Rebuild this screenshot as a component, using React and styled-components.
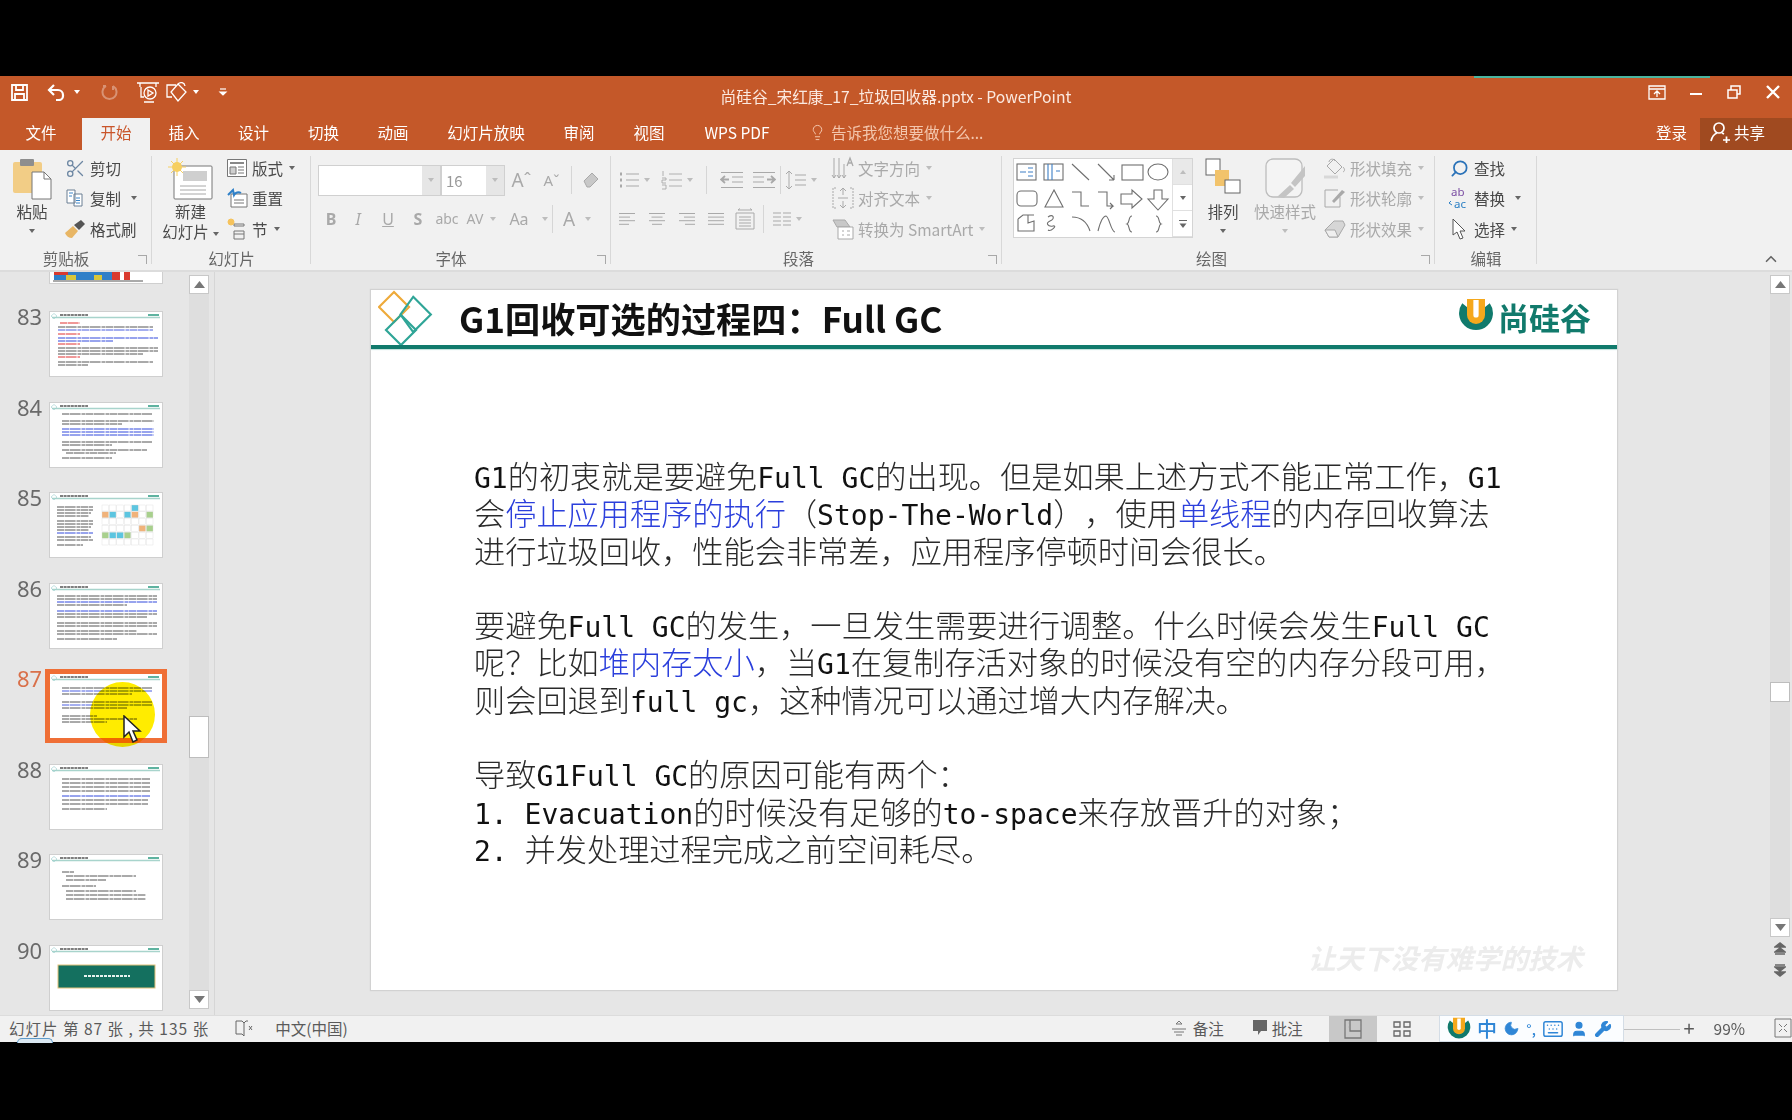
import React from 'react';
import styled, { createGlobalStyle } from 'styled-components';
import { Moon, Keyboard, User, Wrench, Lightbulb, Search, Scissors, ChevronUp } from 'lucide-react';

const UI_FONT = '"Noto Sans CJK SC", "Noto Sans", sans-serif';
const TEAL = '#117a6c';
const DIM = '#a9a9a9';
const TEXT = '#4a4a4a';

const GlobalStyle = createGlobalStyle`
  html, body { margin: 0; padding: 0; background: #000; }
  * { box-sizing: border-box; }
`;

const Screen = styled.div`
  width: 1792px;
  height: 1120px;
  padding-top: 76px;
  background: #000;
  overflow: hidden;
  font-family: ${UI_FONT};
  text-spacing-trim: space-all;
  filter: blur(0.45px);
`;

const Window = styled.div`
  position: relative;
  height: 966px;
  display: flex;
  flex-direction: column;
  background: #e6e6e6;
`;

const TitleBar = styled.div`
  position: relative;
  height: 42px;
  display: grid;
  grid-template-columns: 1fr auto 1fr;
  align-items: center;
  background: #c45829;
  color: #fff;
`;

const ProgressLine = styled.div`
  position: absolute;
  top: 0;
  left: 1474px;
  width: 236px;
  height: 2px;
  background: #4ab5a0;
`;

const QuickAccess = styled.div`
  display: flex;
  align-items: center;
  padding: 0 0 10px 9px;
`;

const Quick = styled.span`
  width: ${p => p.$w}px;
  margin-left: ${p => p.$left || 0}px;
  display: flex;
  align-items: center;
  justify-content: center;
  opacity: ${p => (p.$faded ? 0.35 : 1)};
`;

const DocTitle = styled.div`
  padding-bottom: 2px;
  font-size: 15.7px;
  color: #fbe9e0;
`;

const WindowControls = styled.div`
  display: flex;
  justify-content: flex-end;
  padding-bottom: 10px;
`;

const Control = styled.span`
  width: 38.5px;
  display: flex;
  justify-content: center;
`;

const TabRow = styled.div`
  height: 32px;
  display: flex;
  align-items: stretch;
  background: #c45829;
  font-size: 15.5px;
`;

const Tab = styled.div`
  width: ${p => p.$w}px;
  padding-bottom: 4px;
  display: flex;
  align-items: center;
  justify-content: center;
  color: ${p => (p.$active ? '#c9552a' : '#fff')};
  background: ${p => (p.$active ? '#f1f1f1' : 'transparent')};
`;

const Hint = styled.div`
  margin-left: 19px;
  padding-bottom: 4px;
  display: flex;
  align-items: center;
  gap: 5px;
  color: #f3c6ad;
`;

const TabRight = styled.div`
  margin-left: auto;
  display: flex;
  align-items: stretch;
`;

const Login = styled.div`
  width: 44px;
  padding-bottom: 4px;
  display: flex;
  align-items: center;
  color: #fff;
`;

const Share = styled.div`
  width: 92px;
  padding: 0 0 4px 9px;
  display: flex;
  align-items: center;
  gap: 3px;
  color: #fff;
  background: #a04a20;
`;

const Ribbon = styled.div`
  position: relative;
  height: 122px;
  display: flex;
  background: #f1f1f1;
  border-bottom: 2px solid #dcdcdc;
  color: ${TEXT};
  font-size: 15.5px;
`;

const Group = styled.section`
  width: ${p => p.$w}px;
  display: flex;
  flex-direction: column;
  position: relative;
  &::after {
    content: '';
    position: absolute;
    right: 0;
    top: 6px;
    bottom: 6px;
    width: 1px;
    background: #d8d8d8;
  }
`;

const GroupBody = styled.div`
  height: 96px;
  display: flex;
  padding-left: ${p => p.$left || 0}px;
`;

const GroupLabel = styled.div`
  flex: 1;
  padding-right: ${p => p.$shift || 0}px;
  display: flex;
  align-items: center;
  justify-content: center;
  font-size: 15.5px;
  color: #666;
  position: relative;
`;

const Launcher = styled.span`
  position: absolute;
  right: 5px;
  bottom: 6px;
  width: 9px;
  height: 9px;
  border-left: 1px solid #a8a8a8;
  border-bottom: 1px solid #a8a8a8;
  transform: rotate(180deg);
`;

const LargeButton = styled.div`
  width: ${p => p.$w}px;
  flex: none;
  display: flex;
  flex-direction: column;
  align-items: center;
  padding-top: 6px;
  line-height: 20px;
  white-space: nowrap;
  color: ${p => (p.$dim ? DIM : TEXT)};
`;

const LargeIcon = styled.div`
  height: 45px;
  padding-top: 2px;
  display: flex;
  align-items: flex-start;
  justify-content: center;
`;

const Caret = styled.span`
  display: inline-block;
  width: 0;
  height: 0;
  margin-left: ${p => p.$gap ?? 4}px;
  margin-top: ${p => p.$top || 0}px;
  vertical-align: middle;
  border-left: 3.5px solid transparent;
  border-right: 3.5px solid transparent;
  border-top: 4px solid ${p => (p.$dim ? '#bdbdbd' : p.$light ? '#fff' : '#666')};
  transform: ${p => (p.$up ? 'rotate(180deg)' : 'none')};
`;

const Stack = styled.div`
  margin-left: ${p => p.$left || 0}px;
  padding-top: 3px;
  display: flex;
  flex-direction: column;
`;

const SmallButton = styled.div`
  height: 30.3px;
  display: flex;
  align-items: center;
  gap: 2px;
  white-space: nowrap;
  color: ${p => (p.$dim ? DIM : TEXT)};
`;

const SmallIcon = styled.span`
  width: 26px;
  display: flex;
  justify-content: center;
  flex: none;
`;

const FontPanel = styled.div`
  display: flex;
  flex-direction: column;
  padding-top: 10px;
`;

const ToolRow = styled.div`
  height: ${p => p.$h}px;
  display: flex;
  align-items: center;
  color: ${DIM};
`;

const ComboBox = styled.div`
  width: ${p => p.$w}px;
  height: 31px;
  display: flex;
  align-items: center;
  justify-content: space-between;
  background: #fff;
  border: 1px solid #d0d0d0;
  font-size: 15px;
  color: #9a9a9a;
  padding-left: ${p => p.$pad || 0}px;
`;

const ComboArrow = styled.span`
  width: 18px;
  height: 100%;
  display: flex;
  align-items: center;
  justify-content: center;
  background: #e6e6e6;
`;

const Cell = styled.span`
  width: ${p => p.$w}px;
  flex: none;
  display: flex;
  align-items: center;
  justify-content: center;
  font-family: "Noto Sans", sans-serif;
  font-size: ${p => p.$size || 16}px;
  font-weight: ${p => (p.$bold ? 700 : 400)};
  font-style: ${p => (p.$italic ? 'italic' : 'normal')};
  text-decoration: ${p => (p.$under ? 'underline' : 'none')};
  color: ${DIM};
`;

const Gap = styled.span`
  width: ${p => p.$w}px;
  flex: none;
`;

const Divider = styled.span`
  width: 1px;
  height: 28px;
  flex: none;
  background: #d6d6d6;
  margin: 0 ${p => p.$m || 4}px;
`;

const Gallery = styled.div`
  width: 180px;
  height: 80px;
  margin-top: 8px;
  flex: none;
  display: flex;
  background: #fff;
  border: 1px solid #d4d4d4;
`;

const GalleryScroll = styled.div`
  width: 20px;
  margin-left: auto;
  display: flex;
  flex-direction: column;
  border-left: 1px solid #e0e0e0;
`;

const GalleryStep = styled.span`
  flex: 1;
  display: flex;
  align-items: center;
  justify-content: center;
  background: ${p => (p.$off ? '#e9e9e9' : '#fff')};
  border-bottom: 1px solid #e0e0e0;
`;

const Collapse = styled.span`
  position: absolute;
  right: 12px;
  bottom: 2px;
  display: flex;
  color: #666;
`;

const Main = styled.div`
  height: 743px;
  display: flex;
  background: #e6e6e6;
`;

const SidePane = styled.aside`
  width: 215px;
  display: flex;
  border-right: 1px solid #d6d6d6;
  flex: none;
`;

const SlideList = styled.div`
  width: 189px;
  height: 100%;
  overflow: hidden;
  display: flex;
  flex-direction: column;
  gap: 24.5px;
`;

const ThumbRow = styled.div`
  display: flex;
  flex: none;
  height: 66px;
`;

const ThumbNumber = styled.span`
  width: 49px;
  margin-top: -7px;
  padding-left: 17px;
  font-family: "Noto Sans", sans-serif;
  font-size: 22px;
  line-height: 24px;
  color: ${p => (p.$active ? '#d9704a' : '#6a6a6a')};
`;

const ThumbFrame = styled.div`
  position: relative;
  width: 114px;
  height: 66px;
  background: #fff;
  border: 1px solid ${p => (p.$active ? '#ef6f36' : '#cfcfcf')};
  outline: ${p => (p.$active ? '4px solid #ef6f36' : 'none')};
`;

const PartialThumb = styled.div`
  width: 114px;
  height: 12px;
  margin: 0 0 2.5px 49px;
  flex: none;
  overflow: hidden;
  background: #fff;
  border: 1px solid #cfcfcf;
  border-top: 0;
  display: flex;
`;

const Spotlight = styled.span`
  position: absolute;
  left: 40px;
  top: 8px;
  width: 65px;
  height: 65px;
  border-radius: 50%;
  background: #ffec00;
  mix-blend-mode: multiply;
`;

const Pointer = styled.svg`
  position: absolute;
  left: 72px;
  top: 41px;
`;

const ScrollBar = styled.div`
  width: 20px;
  margin: ${p => p.$margin};
  display: flex;
  flex-direction: column;
  background: #dedede;
  flex: none;
`;

const ScrollStep = styled.span`
  height: 19px;
  flex: none;
  display: flex;
  align-items: center;
  justify-content: center;
  background: #fff;
  border: 1px solid #c8c8c8;
`;

const ScrollThumb = styled.span`
  width: 20px;
  height: ${p => p.$h}px;
  margin-top: ${p => p.$top}px;
  background: #fff;
  border: 1px solid #bdbdbd;
`;

const ScrollFill = styled.span`
  flex: 1;
`;

const PageJump = styled.span`
  height: 22px;
  display: flex;
  align-items: center;
  justify-content: center;
  background: #e6e6e6;
  flex: none;
`;

const SlidePane = styled.div`
  flex: 1;
  display: flex;
  padding: 17px 0 0 155px;
  justify-content: space-between;
`;

const Slide = styled.article`
  width: 1248px;
  height: 702px;
  display: flex;
  flex-direction: column;
  background: #fff;
  border: 1px solid #d2d2d2;
  box-shadow: 0 0 1px #ccc;
`;

const SlideHeader = styled.header`
  height: 55px;
  display: flex;
  align-items: center;
  padding: 0 26px 0 7px;
  flex: none;
`;

const SlideTitle = styled.h1`
  margin: 0 0 0 23px;
  font-family: "Noto Sans CJK SC", "Noto Sans", sans-serif;
  font-size: 35.2px;
  font-weight: 700;
  color: #111;
  white-space: nowrap;
`;

const Brand = styled.div`
  margin: 0 0 3px auto;
  display: flex;
  align-items: center;
  gap: 4px;
  font-size: 31px;
  font-weight: 700;
  color: ${TEAL};
`;

const Rule = styled.div`
  height: 4px;
  flex: none;
  background: ${TEAL};
  box-shadow: 0 1px 1px #bfe0da;
`;

const SlideBody = styled.div`
  padding: 107px 0 0 103px;
  font-family: "Noto Sans CJK SC", sans-serif;
  font-size: 31.2px;
  line-height: 37.3px;
  color: #2a2a2a;
  font-weight: 300;
`;

const Line = styled.p`
  margin: 0;
  height: 37.3px;
  white-space: nowrap;
`;

const Code = styled.span`
  font-family: "DejaVu Sans Mono", monospace;
  font-size: 28px;
  color: #111;
`;

const Mark = styled.span`
  color: #2b3fdc;
`;

const Watermark = styled.div`
  margin: auto 34px 13px auto;
  font-size: 27.5px;
  font-weight: 700;
  font-style: italic;
  color: #ececec;
  white-space: nowrap;
`;

const StatusBar = styled.footer`
  position: relative;
  height: 27px;
  margin-top: auto;
  display: flex;
  align-items: stretch;
  background: #f1f1f1;
  border-top: 1px solid #dcdcdc;
  font-size: 15.5px;
  color: #5a5a5a;
`;

const StatusText = styled.span`
  display: flex;
  align-items: center;
  padding-bottom: 3px;
  white-space: pre;
  margin-left: ${p => p.$left || 0}px;
  letter-spacing: ${p => p.$track || 0}px;
  font-size: ${p => p.$size || 15.5}px;
`;

const ViewButton = styled.span`
  width: ${p => p.$w}px;
  margin-left: ${p => p.$left || 0}px;
  display: flex;
  align-items: center;
  justify-content: center;
  background: ${p => (p.$active ? '#c8c8c8' : 'transparent')};
`;

const ImeBar = styled.div`
  width: 186px;
  margin-left: 12px;
  margin-top: -1px;
  display: flex;
  align-items: center;
  justify-content: space-around;
  padding: 0 8px 0 4px;
  background: #fbfdff;
  border: 1px solid #d4dde6;
  color: #2f86d6;
  font-size: 20px;
  font-weight: 500;
`;

const ImeDegree = styled.span`
  font-size: 14px;
`;

const ZoomLine = styled.span`
  width: 56px;
  height: 1px;
  align-self: center;
  background: #c0c0c0;
`;

const Recorder = styled.span`
  position: absolute;
  left: 17px;
  bottom: -1px;
  width: 36px;
  height: 5px;
  border: 1px solid #5f9bc9;
  border-bottom: 0;
  border-radius: 18px 18px 0 0;
  background: #dbe8f2;
`;

const Svg = ({ w = 20, h = 20, box, children, stroke = '#666', sw = 1 }) => (
  <svg width={w} height={h} viewBox={box || `0 0 ${w} ${h}`} fill="none" stroke={stroke} strokeWidth={sw}>
    {children}
  </svg>
);

const LogoMark = ({ size = 36 }) => (
  <svg width={size} height={size} viewBox="0 0 34 34">
    <path d="M4 5A16 16 0 1 0 30 5L25 9H9z" fill={TEAL} />
    <path d="M8.500 1h17v15a8.500 8.500 0 0 1-17 0z" fill="#f5a81c" />
    <path d="M14.500 2h5v14a2.500 2.500 0 0 1-5 0z" fill="#fff" />
  </svg>
);

const Diamonds = () => (
  <Svg w={58} h={56} sw={2.2} stroke="#2fa597">
    <path d="M23 2 38 17 23 32 8 17z" stroke="#eeaa3a" transform="translate(-7 0)" />
    <path d="M40 8 58 26 40 44 27 26z" transform="translate(-4 -1) scale(.98)" />
    <path d="M27 27 42 42 27 57 12 42z" transform="translate(-4 -2)" />
  </Svg>
);

const SaveIcon = () => (
  <Svg w={19} h={19} stroke="#fff" sw={1.8}>
    <path d="M2 2h15v15H2z" />
    <path d="M6 2v5h7V2M5 17v-6h9v6" />
  </Svg>
);

const UndoIcon = () => (
  <Svg w={20} h={18} stroke="#fff" sw={2.2}>
    <path d="M7 2 2 7l5 5" />
    <path d="M2 7h9a5 5 0 0 1 5 5v1a4 4 0 0 1-4 4H9" />
  </Svg>
);

const RedoIcon = () => (
  <Svg w={18} h={18} stroke="#fff" sw={2}>
    <path d="M12 3a7 7 0 1 1-7 0M12 3V7M5 3H2" />
  </Svg>
);

const ShowIcon = () => (
  <Svg w={24} h={24} stroke="#fff" sw={1.3}>
    <path d="M1 3h22M4 3v4M20 3v4" />
    <circle cx="14" cy="13" r="6" />
    <path d="m12 10 5 3-5 3zM8 22h10M5 7v10h3" />
  </Svg>
);

const ShapesIcon = () => (
  <Svg w={24} h={22} stroke="#fff" sw={1.3}>
    <path d="M11 4H2v12h5M13 3l8 8-8 9-7-9zM13 3a4 4 0 0 1 7 2" />
  </Svg>
);

const Customize = () => (
  <Svg w={10} h={10} stroke="#fff" sw={1.2}>
    <path d="M2 2h6" />
    <path d="m2 5 3 3 3-3z" fill="#fff" />
  </Svg>
);

const ShareIcon = () => (
  <Svg w={22} h={22} stroke="#fff" sw={1.7}>
    <circle cx="10" cy="7" r="5" />
    <path d="M2 20c1-4 3-7 6-8M13 12l2 1M14 19h7M17.5 15.5v7" />
  </Svg>
);

const PasteIcon = () => (
  <svg width="40" height="42" viewBox="0 0 40 42">
    <rect x="1" y="4" width="29" height="31" rx="2" fill="#f2cd86" />
    <rect x="8" y="1" width="14" height="7" rx="1" fill="#8e8e8e" />
    <path d="M20 14h12l7 7v20H20z" fill="#fff" stroke="#777" />
    <path d="M32 14v7h7" fill="none" stroke="#777" />
  </svg>
);

const CopyIcon = () => (
  <Svg w={20} h={20} stroke="#6a7f93">
    <path d="M2 2h8v13H2zM9 6h8v12H9z" fill="#fff" />
    <path d="M4 5h4M4 8h3M11 10h4M11 12.5h4M11 15h4" stroke="#3a84c7" />
  </Svg>
);

const BrushIcon = () => (
  <svg width="22" height="20" viewBox="0 0 22 20">
    <path d="M1 14 9 7l5 5-6 7c-3 0-6-2-7-5z" fill="#e8b665" />
    <path d="m10 6 7-5 4 4-6 6z" fill="#555" />
  </svg>
);

const NewSlideIcon = () => (
  <svg width="46" height="42" viewBox="0 0 46 42">
    <rect x="6" y="8" width="38" height="33" rx="1" fill="#fff" stroke="#777" />
    <rect x="15" y="13" width="24" height="10" fill="#cfcfcf" />
    <path d="M12 28h26M12 32h26M12 36h26" stroke="#a8a8a8" />
    <circle cx="9" cy="9" r="5" fill="#f6cf62" />
    <path d="M9 0v18M0 9h18M3 3l12 12M15 3 3 15" stroke="#f6cf62" />
  </svg>
);

const LayoutIcon = () => (
  <Svg w={22} h={20} stroke="#777">
    <path d="M1.500 1.500h19v17h-19z" fill="#fff" />
    <path d="M4 5h14" stroke="#888" strokeWidth="2" />
    <path d="M4 9h6v7H4z" fill="#cfcfcf" />
    <path d="M12 9h6M12 12h6M12 15h6" />
  </Svg>
);

const ResetIcon = () => (
  <Svg w={22} h={20} stroke="#777">
    <path d="M5 6h16v13H5z" fill="#fff" />
    <path d="M8 12h10M8 15h10" />
    <path d="M2 7 7 2l1 5a5 5 0 0 1 7-2" stroke="#2f80c8" strokeWidth="2" />
  </Svg>
);

const SectionIcon = () => (
  <Svg w={22} h={22} stroke="#777">
    <path d="M8 6h10v2H8zM8 13h10v8H8zM8 16h10" />
    <circle cx="5" cy="4" r="3" fill="#f6c35c" stroke="#f6c35c" />
  </Svg>
);

const AlignIcon = ({ mode = 'left' }) => {
  const widths = mode === 'justify' ? [16, 16, 16, 16] : [16, 11, 16, 10];
  return (
    <Svg w={18} h={16} stroke={DIM}>
      {widths.map((w, i) => {
        const x = mode === 'center' ? 1 + (16 - w) / 2 : mode === 'right' ? 17 - w : 1;
        return <path key={i} d={`M${x} ${2.5 + i * 3.6}h${w}`} />;
      })}
    </Svg>
  );
};

const BulletIcon = () => (
  <Svg w={22} h={20} stroke={DIM}>
    <path d="M8 4h13M8 10h13M8 16h13" />
    <path d="M2 4h3M2 10h3M2 16h3" strokeWidth="3" strokeDasharray="2 1" />
  </Svg>
);

const NumberIcon = () => (
  <Svg w={22} h={20} stroke={DIM}>
    <path d="M8 4h13M8 10h13M8 16h13M2 1v5M1 8h4v2H1v3h4M1 15h4v4H1" strokeWidth=".9" />
  </Svg>
);

const IndentIcon = ({ flip }) => (
  <Svg w={24} h={18} stroke={DIM}>
    <g transform={flip ? 'translate(24 0) scale(-1 1)' : undefined}>
      <path d="M1 1.500h22M1 16.500h22M12 6h11M12 11h11" />
      <path d="M1 8.500h8M5 5 1 8.500 5 12" strokeWidth="1.8" />
    </g>
  </Svg>
);

const SpacingIcon = () => (
  <Svg w={22} h={20} stroke={DIM}>
    <path d="M4 1v18M1 4l3-3 3 3M1 16l3 3 3-3M10 5h11M10 10h11M10 15h11" />
  </Svg>
);

const ColumnsIcon = () => (
  <Svg w={20} h={16} stroke={DIM}>
    <path d="M1 2h8M1 6h8M1 10h8M1 14h8M11 2h8M11 6h8M11 10h8M11 14h8" />
  </Svg>
);

const DistributeIcon = () => (
  <Svg w={20} h={22} stroke={DIM}>
    <path d="M1 5h18v16H1zM4 9h12M4 12h12M4 15h12M4 18h12M3 2h14M3 2l2-1.500M17 2l-2-1.500" />
  </Svg>
);

const DirectionIcon = () => (
  <Svg w={24} h={24} stroke={DIM}>
    <path d="M3 2v20M8 2v20M13 8v14M1 19l2 3 2-3M6 19l2 3 2-3M11 19l2 3 2-3" />
    <path d="m16 10 3-8 3 8M17 7h4" strokeWidth="1.3" />
  </Svg>
);

const AlignTextIcon = () => (
  <Svg w={24} h={24} stroke={DIM}>
    <path d="M5 2H2v20h3M19 2h3v20h-3" strokeDasharray="2 1" />
    <path d="M7 12h10M12 3v6M12 15v6M9 5l3-3 3 3M9 19l3 3 3-3" />
  </Svg>
);

const SmartArtIcon = () => (
  <Svg w={24} h={22} stroke={DIM}>
    <path d="M2 2h12l5 7H6z" fill="#c8c8c8" />
    <path d="M7 9h15v12H7zM11 13h2M16 13h3M11 17h2M16 17h3" fill="#fff" />
  </Svg>
);

const GalleryShapes = () => (
  <svg width="158" height="78" viewBox="0 0 158 78" fill="none" stroke="#6f6f6f" strokeWidth="1.100">
    <rect x="3" y="5" width="19" height="16" fill="#fff" />
    <path d="M6 13h6M14 9h5M14 13h5M14 17h5" stroke="#3d7fc5" />
    <rect x="30" y="5" width="19" height="16" />
    <path d="M34 5v16M38 5v16M42 12h4" stroke="#3d7fc5" />
    <path d="M58 5 75 21M84 5l16 16M100 21l-5 0M100 21v-5" />
    <rect x="108" y="6" width="21" height="15" />
    <ellipse cx="144" cy="13" rx="10" ry="8" />
    <rect x="3" y="32" width="20" height="15" rx="4" />
    <path d="M40 31 31 48h18zM58 33h9v14h8M84 33h9v14h6l-3-3M96 50l3-3" />
    <path d="M107 35h11v-4l10 9-10 9v-4h-11z" />
    <path d="M140 31h8v9h6l-10 11-10-11h6z" />
    <path d="M4 60l5-4h11M4 60v12h16V62l-6 2V56" />
    <path d="M34 58c6-4 7 2 2 4s-2 6 3 5-2 6-5 4" />
    <path d="M58 58c9 0 15 5 18 14M84 72c2-8 5-15 8-15s5 16 9 16" />
    <path d="M122 57c-4 0-2 7-5 8 3 1 1 8 5 8M146 57c4 0 2 7 5 8-3 1-1 8-5 8" transform="translate(-4 0)" />
  </svg>
);

const GalleryMore = () => (
  <svg width="10" height="10" viewBox="0 0 10 10" stroke="#666">
    <path d="M1 1.500h8" />
    <path d="m1.500 4.500h7L5 9z" fill="#666" stroke="none" />
  </svg>
);

const ArrangeIcon = () => (
  <svg width="36" height="36" viewBox="0 0 36 36">
    <rect x="1" y="1" width="14" height="16" fill="#fff" stroke="#666" />
    <rect x="10" y="12" width="14" height="16" fill="#f2c36b" />
    <rect x="20" y="22" width="15" height="13" fill="#fff" stroke="#666" />
  </svg>
);

const QuickStyleIcon = () => (
  <Svg w={42} h={44} stroke="#bdbdbd" sw={1.300}>
    <rect x="2" y="1" width="36" height="38" rx="7" fill="#f4f4f4" />
    <path d="M41 8 27 25l4 4 10-11zM26 27l4 4-10 9-7-1z" fill="#c4c4c4" stroke="none" />
  </Svg>
);

const FillIcon = () => (
  <Svg w={24} h={22} stroke={DIM}>
    <path d="m11 2 8 8-7 7-8-8z" />
    <path d="M6 5c0-3 5-4 6-1M20 10c2 2 2 4 0 5" />
    <path d="M1 20h14" strokeWidth="3" stroke="#d8d8d8" />
  </Svg>
);

const OutlineIcon = () => (
  <Svg w={24} h={22} stroke={DIM}>
    <path d="M15 3H2v17h15V10" />
    <path d="m9 14 10-11 3 2-11 11z" fill={DIM} stroke="none" />
  </Svg>
);

const EffectIcon = () => (
  <svg width="24" height="22" viewBox="0 0 24 22">
    <path d="M2 12 11 3h9l2 4-7 12H6z" fill="#d6d6d6" stroke="#a9a9a9" />
    <path d="M2 12h10l3 7H6z" fill="#efefef" stroke="#a9a9a9" />
  </svg>
);

const ReplaceIcon = () => (
  <Svg w={24} h={24}>
    <text x="4" y="10" fontSize="11.500" fontFamily="Noto Sans" fill="#7b4ea3" stroke="none">ab</text>
    <text x="7" y="22" fontSize="11.500" fontFamily="Noto Sans" fill="#2a7fc4" stroke="none">ac</text>
    <path d="M2 17 4 15M2 17l3 2" stroke="#2a7fc4" />
  </Svg>
);

const SelectIcon = () => (
  <Svg w={18} h={22} stroke="#555">
    <path d="M3 1v16l4-3 3 7 3-1-3-7h5z" fill="#fff" />
  </Svg>
);

const Triangle = ({ down, color = '#777' }) => (
  <svg width="11" height="7" viewBox="0 0 11 7">
    <path d={down ? 'M0 0h11L5.500 7z' : 'M0 7h11L5.500 0z'} fill={color} />
  </svg>
);

const DoubleTriangle = ({ down }) => (
  <Svg w={12} h={13} stroke="#666" sw={1.500}>
    <path d={down ? 'M1 1h10' : 'M1 12h10'} />
    <path d={down ? 'M1 3h10L6 7zM1 8h10L6 12z' : 'M1 10h10L6 6zM1 5h10L6 1z'} fill="#666" />
  </Svg>
);

const BookIcon = () => (
  <Svg w={18} h={18} stroke="#666">
    <path d="M1 2h6l2 2v13l-2-2H1zM9 4l2-2h2M14 7l3 4M17 7l-3 4" />
  </Svg>
);

const NotesIcon = () => (
  <Svg w={16} h={18} stroke="#777">
    <path d="m5 5 3-3 3 3zM1 10h14M3 13h10M5 16h6" />
  </Svg>
);

const CommentIcon = () => (
  <svg width="16" height="17" viewBox="0 0 16 17">
    <path d="M1 1h14v11H9l-3 4v-4H1z" fill="#666" />
  </svg>
);

const NormalViewIcon = () => (
  <Svg w={18} h={20} stroke="#777" sw={1.300}>
    <path d="M1 1h16v18H1zM6 1v11h11M4 4h.1M4 8h.1" />
  </Svg>
);

const GridViewIcon = () => (
  <Svg w={18} h={18} stroke="#666" sw={1.300}>
    <path d="M1 2h6v5H1zM11 2h6v5h-6zM1 11h6v5H1zM11 11h6v5h-6z" />
  </Svg>
);

const FitIcon = () => (
  <Svg w={18} h={20} stroke="#777">
    <path d="M1 1h16v18H1zM5 6l3 3M13 6l-3 3M5 14l3-3M13 14l-3-3" />
  </Svg>
);

const bars = (rows, color = '#555') =>
  rows.map(([y, x, w, c], i) => (
    <path key={i} d={`M${x} ${y}h${w}`} stroke={c || color} strokeWidth="1" strokeDasharray="7 .6 11 .9 4 .5" />
  ));

const RED = '#e03030';
const BLUE = '#3148dc';

const THUMB_TEXT = {
  83: [[11, 10, 20, RED], [15, 8, 95], [18, 8, 95, '#4a5fe0'], [22, 8, 22, RED], [26, 8, 100, BLUE], [29, 8, 55, BLUE], [32, 8, 22, RED], [36, 8, 100], [39, 8, 100], [42, 8, 85], [45, 8, 22, RED], [50, 8, 95], [53, 8, 30]],
  84: [[11, 12, 90], [18, 12, 92], [21, 12, 60], [26, 12, 92, BLUE], [29, 12, 92, BLUE], [32, 12, 92, BLUE], [39, 12, 90], [42, 12, 50], [47, 12, 85], [50, 16, 50], [55, 12, 50]],
  86: [[12, 7, 100], [15, 7, 100], [18, 7, 100, BLUE], [21, 7, 70], [27, 7, 100, BLUE], [30, 7, 100], [33, 7, 90], [39, 7, 100], [42, 7, 100], [47, 7, 80], [50, 7, 100], [55, 7, 60]],
  87: [[14, 12, 90], [17, 12, 90, '#4a5fe0'], [20, 12, 70], [28, 12, 90], [31, 12, 90, '#4a5fe0'], [34, 12, 65], [42, 12, 35], [45, 12, 75], [48, 12, 45]],
  88: [[14, 12, 88], [18, 12, 88], [22, 12, 88], [26, 12, 88], [31, 12, 88, BLUE], [35, 12, 86], [39, 12, 86], [44, 12, 45]],
  89: [[17, 12, 12], [21, 16, 70], [25, 16, 40], [31, 12, 34], [36, 16, 70], [40, 16, 80], [44, 16, 80]],
};

const GRID_FILL = { 2: '#a8d08d', 5: '#f0b27a', 9: '#5cc5e0' };

const MiniSlide = ({ n }) => (
  <svg width="112" height="64" viewBox="0 0 112 64" style={{ display: 'block' }}>
    <path d="M10 3h28" stroke="#555" strokeWidth="1.500" strokeDasharray="3 .6" />
    <path d="M98 3h11" stroke="#2a9a80" strokeWidth="1.500" />
    <path d="M2 5.500h108" stroke="#a8d4cc" strokeWidth="1.500" />
    <path d="M4 1.500 7 4 4 7 1 4z" fill="none" stroke="#9cc" strokeWidth=".6" />
    {bars(THUMB_TEXT[n] || [])}
    {n === 85 && (
      <>
        {bars([[14, 7, 36], [17, 7, 36], [20, 7, 34], [23, 7, 32], [28, 7, 36], [31, 7, 36], [34, 7, 34], [37, 7, 32], [40, 7, 36, BLUE], [44, 7, 34], [47, 7, 36], [52, 7, 26]])}
        {[0, 1, 2, 3, 4, 5].map(r =>
          [0, 1, 2, 3, 4, 5, 6].map(c => {
            const fill = GRID_FILL[(r * r * 5 + c * c * 3 + r * c) % 13] || '#fff';
            return <rect key={`${r}-${c}`} x={52 + c * 7.400} y={12 + r * 6.800} width="6.600" height="6" fill={fill} stroke="#ddd" strokeWidth=".4" />;
          })
        )}
      </>
    )}
    {n === 90 && (
      <>
        <rect x="8" y="19" width="97" height="23" fill="#14705f" stroke="#e2c27a" />
        <path d="M34 30h46" stroke="#e6f2ee" strokeWidth="2" strokeDasharray="3 1" />
      </>
    )}
  </svg>
);

const Cursor = () => (
  <Pointer width="20" height="29" viewBox="0 0 20 29">
    <path d="M2 1v21l5-5 4 10 4-2-4-9h7z" fill="#fff" stroke="#222" strokeWidth="1.500" />
  </Pointer>
);

const TABS = [
  ['文件', 82], ['开始', 68, true], ['插入', 68], ['设计', 71], ['切换', 69], ['动画', 70],
  ['幻灯片放映', 116], ['审阅', 70], ['视图', 70], ['WPS PDF', 106],
];

const THUMBS = [83, 84, 85, 86, 87, 88, 89, 90];

const App = () => (
  <Screen>
    <GlobalStyle />
    <Window>
      <TitleBar>
        <ProgressLine />
        <QuickAccess>
          <Quick $w={21}><SaveIcon /></Quick>
          <Quick $w={22} $left={16}><UndoIcon /></Quick>
          <Quick $w={8} $left={5}><Caret $gap={0} $light /></Quick>
          <Quick $w={20} $left={19} $faded><RedoIcon /></Quick>
          <Quick $w={24} $left={16}><ShowIcon /></Quick>
          <Quick $w={24} $left={5}><ShapesIcon /></Quick>
          <Quick $w={10} $left={2}><Caret $gap={0} $light /></Quick>
          <Quick $w={12} $left={16}><Customize /></Quick>
        </QuickAccess>
        <DocTitle>尚硅谷_宋红康_17_垃圾回收器.pptx - PowerPoint</DocTitle>
        <WindowControls>
          <Control>
            <Svg w={18} h={15} stroke="#fff" sw={1.300}><path d="M1 1h16v13H1zM1 4h16M9 12V6M6 9l3-3 3 3" /></Svg>
          </Control>
          <Control>
            <Svg w={14} h={14} stroke="#fff" sw={2}><path d="M1 9h12" /></Svg>
          </Control>
          <Control>
            <Svg w={14} h={14} stroke="#fff" sw={1.500}><path d="M1 5h9v8H1zM4 5V1h9v8h-3" /></Svg>
          </Control>
          <Control>
            <Svg w={14} h={14} stroke="#fff" sw={2.400}><path d="m1 1 12 12M13 1 1 13" /></Svg>
          </Control>
        </WindowControls>
      </TitleBar>

      <TabRow>
        {TABS.map(([label, w, active]) => (
          <Tab key={label} $w={w} $active={active}>{label}</Tab>
        ))}
        <Hint>
          <Lightbulb size={17} strokeWidth={1.4} color="#f3c6ad" />
          告诉我您想要做什么...
        </Hint>
        <TabRight>
          <Login>登录</Login>
          <Share><ShareIcon />共享</Share>
        </TabRight>
      </TabRow>

      <Ribbon>
        <Group $w={152}>
          <GroupBody $left={2}>
            <LargeButton $w={60}>
              <LargeIcon><PasteIcon /></LargeIcon>
              粘贴
              <Caret $gap={0} $top={8} />
            </LargeButton>
            <Stack>
              <SmallButton>
                <SmallIcon><Scissors size={21} strokeWidth={1.5} color="#6d87a3" /></SmallIcon>
                剪切
              </SmallButton>
              <SmallButton><SmallIcon><CopyIcon /></SmallIcon>复制<Caret $gap={8} /></SmallButton>
              <SmallButton><SmallIcon><BrushIcon /></SmallIcon>格式刷</SmallButton>
            </Stack>
          </GroupBody>
          <GroupLabel $shift={20}>剪贴板<Launcher /></GroupLabel>
        </Group>

        <Group $w={159}>
          <GroupBody $left={5}>
            <LargeButton $w={67}>
              <LargeIcon><NewSlideIcon /></LargeIcon>
              新建
              <span>幻灯片<Caret /></span>
            </LargeButton>
            <Stack>
              <SmallButton><SmallIcon><LayoutIcon /></SmallIcon>版式<Caret /></SmallButton>
              <SmallButton><SmallIcon><ResetIcon /></SmallIcon>重置</SmallButton>
              <SmallButton><SmallIcon><SectionIcon /></SmallIcon>节<Caret /></SmallButton>
            </Stack>
          </GroupBody>
          <GroupLabel>幻灯片</GroupLabel>
        </Group>

        <Group $w={300}>
          <GroupBody $left={7}>
            <FontPanel>
              <ToolRow $h={40}>
                <ComboBox $w={123}>
                  <span />
                  <ComboArrow><Caret $gap={0} $dim /></ComboArrow>
                </ComboBox>
                <ComboBox $w={64} $pad={4}>
                  16
                  <ComboArrow><Caret $gap={0} $dim /></ComboArrow>
                </ComboBox>
                <Cell $w={33} $size={19}>Aˆ</Cell>
                <Cell $w={27} $size={15}>Aˇ</Cell>
                <Divider $m={6} />
                <Cell $w={26}>
                  <Svg w={20} h={20} stroke={DIM}><path d="m3 11 8-8 6 6-8 8H6z" fill="#c8c8c8" /></Svg>
                </Cell>
              </ToolRow>
              <ToolRow $h={37.5}>
                <Cell $w={26} $bold>B</Cell>
                <Cell $w={28} $italic>I</Cell>
                <Cell $w={32} $under>U</Cell>
                <Cell $w={28} $bold>S</Cell>
                <Cell $w={30} $size={14}>abc</Cell>
                <Cell $w={26} $size={14}>AV</Cell>
                <Caret $gap={2} $dim />
                <Cell $w={46}>Aa</Cell>
                <Caret $gap={0} $dim />
                <Divider $m={4} />
                <Cell $w={24} $size={19}>A</Cell>
                <Caret $gap={4} $dim />
              </ToolRow>
            </FontPanel>
          </GroupBody>
          <GroupLabel $shift={20}>字体<Launcher /></GroupLabel>
        </Group>

        <Group $w={391}>
          <GroupBody $left={7}>
            <FontPanel>
              <ToolRow $h={40}>
                <BulletIcon /><Caret $dim />
                <Gap $w={11} />
                <NumberIcon /><Caret $dim />
                <Divider $m={13} />
                <IndentIcon />
                <Gap $w={8} />
                <IndentIcon flip />
                <Divider $m={4} />
                <SpacingIcon /><Caret $dim />
              </ToolRow>
              <ToolRow $h={37.5}>
                <AlignIcon />
                <Gap $w={12} />
                <AlignIcon mode="center" />
                <Gap $w={12} />
                <AlignIcon mode="right" />
                <Gap $w={11} />
                <AlignIcon mode="justify" />
                <Gap $w={10} />
                <DistributeIcon />
                <Divider $m={8} />
                <ColumnsIcon /><Caret $dim />
              </ToolRow>
            </FontPanel>
            <Stack $left={13}>
              <SmallButton $dim><SmallIcon><DirectionIcon /></SmallIcon>文字方向<Caret $dim /></SmallButton>
              <SmallButton $dim><SmallIcon><AlignTextIcon /></SmallIcon>对齐文本<Caret $dim /></SmallButton>
              <SmallButton $dim><SmallIcon><SmartArtIcon /></SmallIcon>转换为 SmartArt<Caret $dim /></SmallButton>
            </Stack>
          </GroupBody>
          <GroupLabel $shift={16}>段落<Launcher /></GroupLabel>
        </Group>

        <Group $w={433}>
          <GroupBody $left={11}>
            <Gallery>
              <GalleryShapes />
              <GalleryScroll>
                <GalleryStep $off><Caret $gap={0} $dim $up /></GalleryStep>
                <GalleryStep><Caret $gap={0} /></GalleryStep>
                <GalleryStep><GalleryMore /></GalleryStep>
              </GalleryScroll>
            </Gallery>
            <LargeButton $w={60}>
              <LargeIcon><ArrangeIcon /></LargeIcon>
              排列
              <Caret $gap={0} $top={8} />
            </LargeButton>
            <LargeButton $w={64} $dim>
              <LargeIcon><QuickStyleIcon /></LargeIcon>
              快速样式
              <Caret $gap={0} $dim $top={8} />
            </LargeButton>
            <Stack $left={5}>
              <SmallButton $dim><SmallIcon><FillIcon /></SmallIcon>形状填充<Caret $dim /></SmallButton>
              <SmallButton $dim><SmallIcon><OutlineIcon /></SmallIcon>形状轮廓<Caret $dim /></SmallButton>
              <SmallButton $dim><SmallIcon><EffectIcon /></SmallIcon>形状效果<Caret $dim /></SmallButton>
            </Stack>
          </GroupBody>
          <GroupLabel $shift={14}>绘图<Launcher /></GroupLabel>
        </Group>

        <Group $w={102}>
          <GroupBody $left={11}>
            <Stack>
              <SmallButton><SmallIcon><Search size={19} strokeWidth={2.2} color="#2a72b8" style={{ transform: 'scaleX(-1)' }} /></SmallIcon>查找</SmallButton>
              <SmallButton><SmallIcon><ReplaceIcon /></SmallIcon>替换<Caret $gap={8} /></SmallButton>
              <SmallButton><SmallIcon><SelectIcon /></SmallIcon>选择<Caret /></SmallButton>
            </Stack>
          </GroupBody>
          <GroupLabel>编辑</GroupLabel>
        </Group>
        <Collapse><ChevronUp size={18} strokeWidth={2.2} /></Collapse>
      </Ribbon>

      <Main>
        <SidePane>
          <SlideList>
            <PartialThumb>
              <svg width="112" height="12" viewBox="0 0 112 12">
                <path d="M4 0h36v8H4zM40 0h30v8H40z" fill="#2f7fc8" />
                <path d="M4 0h14v3H4zM62 0h8v8h-8z" fill="#d93a2e" />
                <path d="M16 3h10v5H16zM44 3h8v5h-8z" fill="#d8c63a" />
                <path d="M74 0h6v8h-6z" fill="#d93a2e" />
                <path d="M3 9h90" stroke="#555" />
              </svg>
            </PartialThumb>
            {THUMBS.map(n => (
              <ThumbRow key={n}>
                <ThumbNumber $active={n === 87}>{n}</ThumbNumber>
                <ThumbFrame $active={n === 87}>
                  <MiniSlide n={n} />
                  {n === 87 && <Spotlight />}
                  {n === 87 && <Cursor />}
                </ThumbFrame>
              </ThumbRow>
            ))}
          </SlideList>
          <ScrollBar $margin="3px 0 6px 0">
            <ScrollStep><Triangle /></ScrollStep>
            <ScrollThumb $h={42} $top={422} />
            <ScrollFill />
            <ScrollStep><Triangle down /></ScrollStep>
          </ScrollBar>
        </SidePane>

        <SlidePane>
          <Slide>
            <SlideHeader>
              <Diamonds />
              <SlideTitle>G1回收可选的过程四：Full GC</SlideTitle>
              <Brand><LogoMark />尚硅谷</Brand>
            </SlideHeader>
            <Rule />
            <SlideBody>
              <Line><Code>G1</Code>的初衷就是要避免<Code>Full GC</Code>的出现。但是如果上述方式不能正常工作，<Code>G1</Code></Line>
              <Line>会<Mark>停止应用程序的执行</Mark>（<Code>Stop-The-World</Code>），使用<Mark>单线程</Mark>的内存回收算法</Line>
              <Line>进行垃圾回收，性能会非常差，应用程序停顿时间会很长。</Line>
              <Line />
              <Line>要避免<Code>Full GC</Code>的发生，一旦发生需要进行调整。什么时候会发生<Code>Full GC</Code></Line>
              <Line>呢？比如<Mark>堆内存太小</Mark>，当<Code>G1</Code>在复制存活对象的时候没有空的内存分段可用，</Line>
              <Line>则会回退到<Code>full gc</Code>，这种情况可以通过增大内存解决。</Line>
              <Line />
              <Line>导致<Code>G1Full GC</Code>的原因可能有两个：</Line>
              <Line><Code>1. Evacuation</Code>的时候没有足够的<Code>to-space</Code>来存放晋升的对象；</Line>
              <Line><Code>2. </Code>并发处理过程完成之前空间耗尽。</Line>
            </SlideBody>
            <Watermark>让天下没有难学的技术</Watermark>
          </Slide>
          <ScrollBar $margin="-14px 2px 34px 0">
            <ScrollStep><Triangle /></ScrollStep>
            <ScrollThumb $h={20} $top={388} />
            <ScrollFill />
            <ScrollStep><Triangle down /></ScrollStep>
            <PageJump><DoubleTriangle /></PageJump>
            <PageJump><DoubleTriangle down /></PageJump>
          </ScrollBar>
        </SlidePane>
      </Main>

      <StatusBar>
        <StatusText $left={9} $track={1}>幻灯片 第 87 张 , 共 135 张</StatusText>
        <StatusText $left={26}><BookIcon /></StatusText>
        <StatusText $left={22}>中文(中国)</StatusText>
        <StatusText $left={823}><NotesIcon /></StatusText>
        <StatusText $left={6}>备注</StatusText>
        <StatusText $left={28}><CommentIcon /></StatusText>
        <StatusText $left={4}>批注</StatusText>
        <ViewButton $w={48} $left={26} $active><NormalViewIcon /></ViewButton>
        <ViewButton $w={50}><GridViewIcon /></ViewButton>
        <ImeBar>
          <LogoMark size={24} />
          <span>中</span>
          <Moon size={17} fill="#2f86d6" strokeWidth={1} />
          <ImeDegree>°,</ImeDegree>
          <Keyboard size={22} strokeWidth={1.6} />
          <User size={18} fill="#2f86d6" strokeWidth={1.5} />
          <Wrench size={18} fill="#2f86d6" strokeWidth={1.5} />
        </ImeBar>
        <ZoomLine />
        <StatusText $left={3} $size={20}>+</StatusText>
        <StatusText $left={19}>99%</StatusText>
        <StatusText $left={29}><FitIcon /></StatusText>
        <Recorder />
      </StatusBar>
    </Window>
  </Screen>
);

export default App;
